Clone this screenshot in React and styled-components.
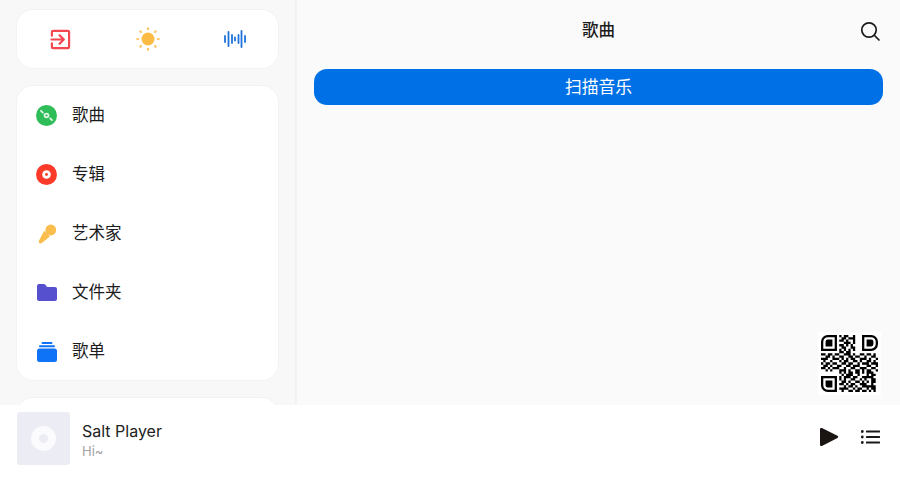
import React from "react";
import styled, { createGlobalStyle } from "styled-components";

const Global = createGlobalStyle`
  html, body { margin: 0; padding: 0; background: #fff; }
  * { box-sizing: border-box; }
`
const Page = styled.div`
  width: 900px;
  height: 482px;
  display: flex;
  flex-direction: column;
  overflow: hidden;
  font-family: "Noto Sans CJK SC", "Noto Sans", sans-serif;
  color: #1c1c1c;
`
const Top = styled.div`
  height: 405px;
  display: flex;
  background: #fafafa;
`
const Sidebar = styled.aside`
  width: 297px;
  flex-shrink: 0;
  height: 405px;
  overflow: hidden;
  padding: 10px 17px 0;
  display: flex;
  flex-direction: column;
  gap: 18px;
  background: #f8f8f8;
  border-right: 2px solid #f2f2f2;
`
const Card = styled.div`
  width: 261px;
  flex-shrink: 0;
  background: #fff;
  border-radius: 16px;
  box-shadow: 0 0 0 1px #f3f3f3;
`
const QuickCard = styled(Card)`
  height: 58px;
  display: flex;
  align-items: center;
  justify-content: space-around;
`
const NavCard = styled(Card)`
  height: 294px;
`
const PeekCard = styled(Card)`
  height: 60px;
`
const QuickBtn = styled.div`
  width: 87px;
  display: flex;
  justify-content: center;
`
const NavRow = styled.div`
  height: 59px;
  display: flex;
  align-items: center;
  padding-left: 18px;
  gap: 14px;
  font-size: 16.500px;
`
const NavIcon = styled.div`
  width: 23px;
  height: 23px;
  display: flex;
  align-items: center;
  justify-content: center;
`
const NavLabel = styled.span`
  padding-bottom: 3px;
`
const Main = styled.main`
  flex: 1;
  position: relative;
  padding: 0 17px;
`
const Header = styled.header`
  height: 61px;
  display: flex;
  align-items: center;
  justify-content: center;
  position: relative;
`
const Title = styled.h1`
  margin: 0;
  padding-bottom: 4px;
  font-size: 16.500px;
  font-weight: 500;
`
const SearchBtn = styled.div`
  position: absolute;
  right: 2px;
  top: 20px;
  width: 22px;
  height: 22px;
`
const ScanButton = styled.button`
  display: block;
  margin: 8px 0 0;
  width: 569px;
  height: 36px;
  border: none;
  border-radius: 13px;
  background: #0070e6;
  color: #fff;
  font-family: inherit;
  font-size: 16.800px;
  padding: 0 0 2px;
`
const QrBox = styled.div`
  position: absolute;
  left: 521px;
  top: 332px;
  width: 63px;
  height: 63px;
  padding: 3px;
  background: #fff;
`
const Player = styled.footer`
  height: 77px;
  display: flex;
  align-items: flex-start;
  background: #fff;
  padding: 7px 17px 0;
`
const Cover = styled.div`
  width: 53px;
  height: 53px;
  border-radius: 3px;
  background: #ecedf4;
  display: flex;
  align-items: center;
  justify-content: center;
`
const Disc = styled.div`
  width: 25px;
  height: 25px;
  border-radius: 50%;
  border: 8px solid #fbfbfd;
  background: #ecedf4;
`
const Track = styled.div`
  margin-left: 12px;
  flex: 1;
  padding-top: 9px;
`
const TrackName = styled.div`
  font-family: Inter, "Noto Sans", sans-serif;
  font-size: 16px;
  line-height: 20px;
  color: #222;
`
const TrackSub = styled.div`
  font-family: Inter, "Noto Sans", sans-serif;
  font-size: 13px;
  line-height: 20px;
  color: #a3a3a3;
`
const Controls = styled.div`
  height: 50px;
  display: flex;
  align-items: center;
  gap: 22px;
  margin-right: 3px;
`

const ExitIcon = () => (
  <svg width="21" height="21" viewBox="0 0 22 22" fill="none" stroke="#f4474f" strokeWidth="2.300" strokeLinecap="round" strokeLinejoin="round">
    <path d="M2 7V3.200C2 2.500 2.500 2 3.200 2h15.600c.7 0 1.200.5 1.200 1.200v15.600c0 .7-.5 1.200-1.200 1.200H3.200C2.500 20 2 19.500 2 18.800V15" />
    <path d="M1.500 11h12.500M10 6.500 14.500 11 10 15.500" />
  </svg>
)
const SunIcon = () => (
  <svg width="24" height="24" viewBox="0 0 24 24" fill="#fcbb45">
    <circle cx="12" cy="12" r="6.500" />
    <g stroke="#fcc561" strokeWidth="2.200" strokeLinecap="round">
      <path d="M12 1.300v.8M12 21.900v.8M1.300 12h.8M21.900 12h.8M4.400 4.400l.5.5M19.100 19.100l.5.5M4.400 19.600l.5-.5M19.100 4.900l.5-.5" />
    </g>
  </svg>
)
const WaveIcon = () => (
  <svg width="22" height="18" viewBox="0 0 22 18" fill="none" stroke="#1f73dc" strokeWidth="1.800" strokeLinecap="round">
    <path d="M1 6v6M4.500 2v14M8 5v8M11 7.500v3M14.500 5v8M17.500 1v16M21 6v6" />
  </svg>
)
const SongIcon = () => (
  <svg width="21" height="21" viewBox="0 0 21 21">
    <circle cx="10.500" cy="10.500" r="10.500" fill="#2fbd59" />
    <circle cx="10.500" cy="10.500" r="2.800" fill="#e3f6e9" />
    <circle cx="10.500" cy="10.500" r="1.100" fill="#2fbd59" />
    <path d="M5 5.800 6.800 7.600M14.200 13.400 16 15.200" stroke="#e3f6e9" strokeWidth="1.800" strokeLinecap="round" />
  </svg>
)
const AlbumIcon = () => (
  <svg width="21" height="21" viewBox="0 0 21 21">
    <circle cx="10.500" cy="10.500" r="10.500" fill="#fb3a2a" />
    <circle cx="10.500" cy="10.500" r="4.300" fill="#fff" />
    <circle cx="10.500" cy="10.500" r="1.400" fill="#fb3a2a" />
  </svg>
)
const MicIcon = () => (
  <svg width="20" height="20" viewBox="0 0 20 20" fill="#fbbd4b">
    <circle cx="13.800" cy="6" r="5.400" />
    <path d="M7.200 6.800 13 12.600 4.800 19c-.8.600-1.800.6-2.500-.1s-.8-1.700-.2-2.500z" />
  </svg>
)
const FolderIcon = () => (
  <svg width="20" height="17" viewBox="0 0 20 17">
    <path d="M0 2C0 .9.900 0 2 0h4.800c.6 0 1 .2 1.400.6L10 3h8c1.100 0 2 .9 2 2v10c0 1.100-.9 2-2 2H2c-1.100 0-2-.9-2-2z" fill="#5650cf" />
  </svg>
)
const ListIcon = () => (
  <svg width="20" height="20" viewBox="0 0 20 20" fill="#0f73f7">
    <rect x="4.500" y="0" width="11" height="2" rx="1" />
    <rect x="2" y="3.300" width="16" height="2" rx="1" />
    <rect x="0" y="6.500" width="20" height="13.500" rx="2.500" />
  </svg>
)
const SearchIcon = () => (
  <svg width="22" height="22" viewBox="0 0 22 22" fill="none" stroke="#1a1a1a" strokeWidth="1.700" strokeLinecap="round">
    <circle cx="10" cy="10" r="7.200" />
    <path d="M15.500 15.500 20 20" />
  </svg>
)
const PlayIcon = () => (
  <svg width="20" height="20" viewBox="0 0 20 20">
    <path d="M1 2.200C1 1.200 2 .6 2.900 1.100l15.600 7.700c.9.500.9 1.800 0 2.300L2.900 18.900c-.9.500-1.900-.1-1.900-1.100z" fill="#1a1512" />
  </svg>
)
const QueueIcon = () => (
  <svg width="19" height="14" viewBox="0 0 19 14" fill="#1a1a1a">
    <circle cx="1.300" cy="1.500" r="1.400" />
    <circle cx="1.300" cy="7" r="1.400" />
    <circle cx="1.300" cy="12.500" r="1.400" />
    <rect x="5" y="0.500" width="14" height="2.100" rx="0.500" />
    <rect x="5" y="6" width="14" height="2.100" rx="0.500" />
    <rect x="5" y="11.500" width="14" height="2.100" rx="0.500" />
  </svg>
)

// rough reading of the code in the picture, 25 modules. finders are drawn apart
const QR = [
  "........1011001..........",
  "........0110111..........",
  "........1101001..........",
  "........0011101..........",
  "........1101010..........",
  "........0110011..........",
  "........1010101..........",
  "........1101100..........",
  "1101101100111010011011010",
  "0011010011001101100100110",
  "1110011101010110011101001",
  "0100100010110011010011010",
  "1011011001101100101110111",
  "0110100110011011100011001",
  "1101011100100110011100110",
  "0010100011101001101011001",
  "........1010110110101110.",
  "........0101110010001011.",
  "........1011101100111110.",
  "........1010011001010011.",
  "........0110100110101011.",
  "........1101011001110010.",
  "........0010110100111111.",
  "........1111001011001011.",
  "........0100110110110101.",
].map((r) => r.split(""))

function QrCode() {
  const cells = []
  QR.forEach((row, y) => row.forEach((c, x) => {
    if (c === "1") cells.push(`M${x} ${y}h1v1h-1z`)
  }))
  return (
    <svg width="57" height="57" viewBox="0 0 25 25">
      <path d={cells.join("")} fill="#000" />
      <g fill="none" stroke="#000">
        <path d="M.5 3A2.500 2.500 0 0 1 3 .5h3.500v6H.5z" />
        <path d="M18.500.5H22A2.500 2.500 0 0 1 24.500 3v1A2.500 2.500 0 0 1 22 6.500h-3.500z" />
        <path d="M.5 18.500h6v6H3A2.500 2.500 0 0 1 .5 22z" />
      </g>
      <path d="M2 3a1 1 0 0 1 1-1h2v3H2zM20 2h2a1 1 0 0 1 1 1v1a1 1 0 0 1-1 1h-2zM2 20h3v3H3a1 1 0 0 1-1-1z" fill="#000" />
    </svg>
  )
}

const navItems = [
  { label: "歌曲", icon: <SongIcon /> },
  { label: "专辑", icon: <AlbumIcon /> },
  { label: "艺术家", icon: <MicIcon /> },
  { label: "文件夹", icon: <FolderIcon /> },
  { label: "歌单", icon: <ListIcon /> },
]

export default function App() {
  return (
    <Page>
      <Global />
      <Top>
        <Sidebar>
          <QuickCard>
            <QuickBtn><ExitIcon /></QuickBtn>
            <QuickBtn><SunIcon /></QuickBtn>
            <QuickBtn><WaveIcon /></QuickBtn>
          </QuickCard>
          <NavCard>
            {navItems.map((item) => (
              <NavRow key={item.label}>
                <NavIcon>{item.icon}</NavIcon>
                <NavLabel>{item.label}</NavLabel>
              </NavRow>
            ))}
          </NavCard>
          <PeekCard />
        </Sidebar>
        <Main>
          <Header>
            <Title>歌曲</Title>
            <SearchBtn><SearchIcon /></SearchBtn>
          </Header>
          <ScanButton>扫描音乐</ScanButton>
          <QrBox><QrCode /></QrBox>
        </Main>
      </Top>
      <Player>
        <Cover><Disc /></Cover>
        <Track>
          <TrackName>Salt Player</TrackName>
          <TrackSub>Hi~</TrackSub>
        </Track>
        <Controls>
          <PlayIcon />
          <QueueIcon />
        </Controls>
      </Player>
    </Page>
  )
}
